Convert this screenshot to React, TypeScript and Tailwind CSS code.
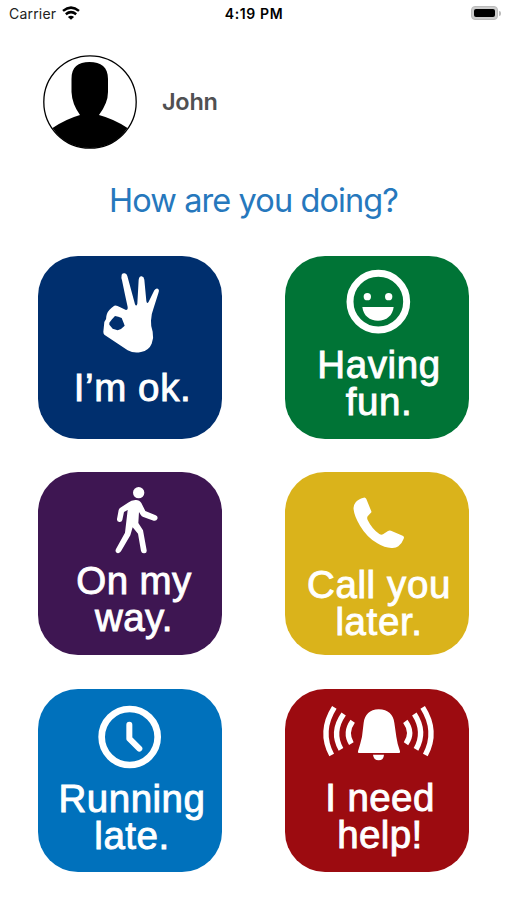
import type { ReactNode } from "react";

type Message = {
  lines: string[];
  color: string;
  textStyle: string;
  icon: ReactNode;
};

const messages: Message[] = [
  {
    lines: ["I’m ok."],
    color: "bg-[#002f6e]",
    textStyle: "mt-[24px] pl-[5px] tracking-[0.6px]",
    icon: (
      <path
        fillRule="evenodd"
        d="M251 54Q254 49 260 50Q266 51 268 58L291 143Q295 151 298 141L302 69Q304 58 311 59Q318 60 319 69L325 133Q327 144 332 135L349 101Q355 93 361 97Q365 101 361 110L346 157Q340 171 339 192Q338 207 344 225Q348 243 341 261Q333 281 309 286Q288 291 269 281L199 234Q196 231 196 225L199 196Q206 190 205 179Q207 164 221 153L229 147Q236 145 245 151L264 160Q270 160 269 151L261 114L252 71Q249 62 251 54ZM214 198L222 188L231 178L241 180L251 184L257 199L260 207L249 217L239 221L224 216L214 204Z"
      />
    ),
  },
  {
    lines: ["Having", "fun."],
    color: "bg-[#007436]",
    textStyle: "mt-[1px] pl-[4px] tracking-[0.6px]",
    icon: (
      <>
        <circle cx="280" cy="135" r="85" fill="none" stroke="white" strokeWidth="21" />
        <circle cx="247" cy="120" r="11" />
        <circle cx="311" cy="120" r="11" />
        <path d="M232 151H326C323 177 304 192 279 192C254 192 235 177 232 151Z" />
      </>
    ),
  },
  {
    lines: ["On my", "way."],
    color: "bg-[#3e1652]",
    textStyle: "mt-[1px] pl-[8px] tracking-[0.4px]",
    icon: (
      <>
        <circle cx="302" cy="60" r="17" />
        <path d="M270 90Q280 82 292 82Q304 81 310 91L322 115L353 128Q361 132 358 139Q355 146 347 144L316 133Q311 131 308 126L303 118L301 151L315 173L326 233Q327 241 319 242Q311 243 309 235L300 183L284 164L277 188L249 236Q245 243 237 241Q230 237 234 229L261 180L269 112L258 118L253 142Q251 149 244 148Q236 147 237 139L242 112Q243 108 247 105Z" />
      </>
    ),
  },
  {
    lines: ["Call you", "later."],
    color: "bg-[#dab31b]",
    textStyle: "mt-[5px] pl-[4px] tracking-[0.6px]",
    icon: (
      <path d="M236 75Q241 73 244 79L259 116Q260 119 257 121L248 131Q245 135 248 142Q261 169 283 184Q289 188 294 185L309 175Q313 172 318 174L353 189Q359 192 356 198Q350 214 340 221Q333 227 319 226Q299 226 277 212Q245 193 225 159Q208 130 206 111Q204 99 211 90Q219 79 236 75Z" />
    ),
  },
  {
    lines: ["Running", "late."],
    color: "bg-[#0071bc]",
    textStyle: "mt-[2px] pl-[4px] tracking-[0.5px]",
    icon: (
      <g fill="none" stroke="white" strokeLinecap="round" strokeLinejoin="round">
        <circle cx="275" cy="142" r="84" strokeWidth="20" />
        <path d="M274 105V147L304 177" strokeWidth="18" />
      </g>
    ),
  },
  {
    lines: ["I need", "help!"],
    color: "bg-[#9c0b10]",
    textStyle: "mt-[1px] pl-[6px] tracking-[0.4px]",
    icon: (
      <>
        <path d="M281 59C310 59 325 76 328 99L334 141Q337 163 345 185Q347 190 342 190H222Q217 190 219 185Q226 163 231 141L236 99C239 76 254 59 281 59Z" />
        <path d="M264 195H297Q296 212 281 212Q266 212 264 195Z" />
        <g fill="none" stroke="white" strokeWidth="16">
          <path d="M148 53Q102 125 140 196" />
          <path d="M176 73Q138 127 168 179" />
          <path d="M203 95Q179 129 199 162" />
          <path d="M413 53Q459 125 421 196" />
          <path d="M388 73Q423 127 393 179" />
          <path d="M361 95Q386 129 363 162" />
        </g>
      </>
    ),
  },
];

const StatusBar = () => (
  <div className="flex h-[26px] items-center justify-between pr-[6px] pl-[9px] text-[14px] text-[#222]">
    <div className="flex flex-1 items-center gap-[6px]">
      <span className="tracking-[0.2px]">Carrier</span>
      <svg viewBox="0 0 18 14" className="h-[14px] w-[18px]" fill="none" stroke="black" strokeWidth="2.5">
        <path d="M1 4.9Q9-1.7 17 4.9" />
        <path d="M3.8 8.2Q9 4.1 14.2 8.2" />
        <path d="M9 13.8L5.9 10.9Q9 8.7 12.1 10.9Z" fill="black" stroke="none" />
      </svg>
    </div>
    <span className="pr-[2px] font-semibold tracking-[0.6px] text-black">4:19 PM</span>
    <div className="flex flex-1 items-center justify-end gap-px">
      <div className="h-[14px] w-[27px] rounded-[4px] border border-[#bbb] bg-[#ccc] p-[2px]">
        <div className="h-full rounded-[2px] bg-black" />
      </div>
      <div className="h-[5px] w-[2px] rounded-r-full bg-[#bbb]" />
    </div>
  </div>
);

const Avatar = () => (
  <svg viewBox="0 0 94 94" className="h-[94px] w-[94px]">
    <path d="M9.5 73Q23 64 37 60Q29 49 28.5 37V24C28.5 12 35 7 46.5 7C58 7 65 12 65 24V37Q65 48 56 60Q71 64 84.5 73Q71 93 47 93Q23 93 9.5 73Z" />
    <circle cx="47" cy="47" r="46.2" fill="none" stroke="black" strokeWidth="1.3" />
  </svg>
);

const MessageButton = ({ lines, color, textStyle, icon }: Message) => (
  <button
    type="button"
    className={`flex h-[183px] w-[184px] flex-col items-center rounded-[40px] text-white ${color}`}
  >
    <svg viewBox="0 -2 552 267" className="h-[89px] w-[184px] shrink-0 overflow-visible" fill="white">
      {icon}
    </svg>
    <span
      className={`flex flex-col items-center font-['Liberation_Sans',sans-serif] text-[38.5px] leading-[37px] whitespace-nowrap [-webkit-text-stroke:0.9px_white] ${textStyle}`}
    >
      {lines.map((line) => (
        <span key={line}>{line}</span>
      ))}
    </span>
  </button>
);

export default function App() {
  return (
    <div className="h-[900px] w-[507px] overflow-hidden bg-white font-['Inter',sans-serif]">
      <StatusBar />
      <div className="mt-[29px] ml-[43px] flex items-center gap-[25px]">
        <Avatar />
        <span className="text-[23.5px] font-semibold tracking-[-0.25px] text-[#505052]">John</span>
      </div>
      <h1 className="mt-[32px] h-[40px] text-center text-[32.5px] leading-[40px] tracking-[-0.9px] text-[#2678bd]">
        How are you doing?
      </h1>
      <div className="mt-[35px] ml-[38px] grid w-[431px] grid-cols-[184px_184px] justify-between gap-y-[33.4px]">
        {messages.map((message) => (
          <MessageButton key={message.lines[0]} {...message} />
        ))}
      </div>
    </div>
  );
}
